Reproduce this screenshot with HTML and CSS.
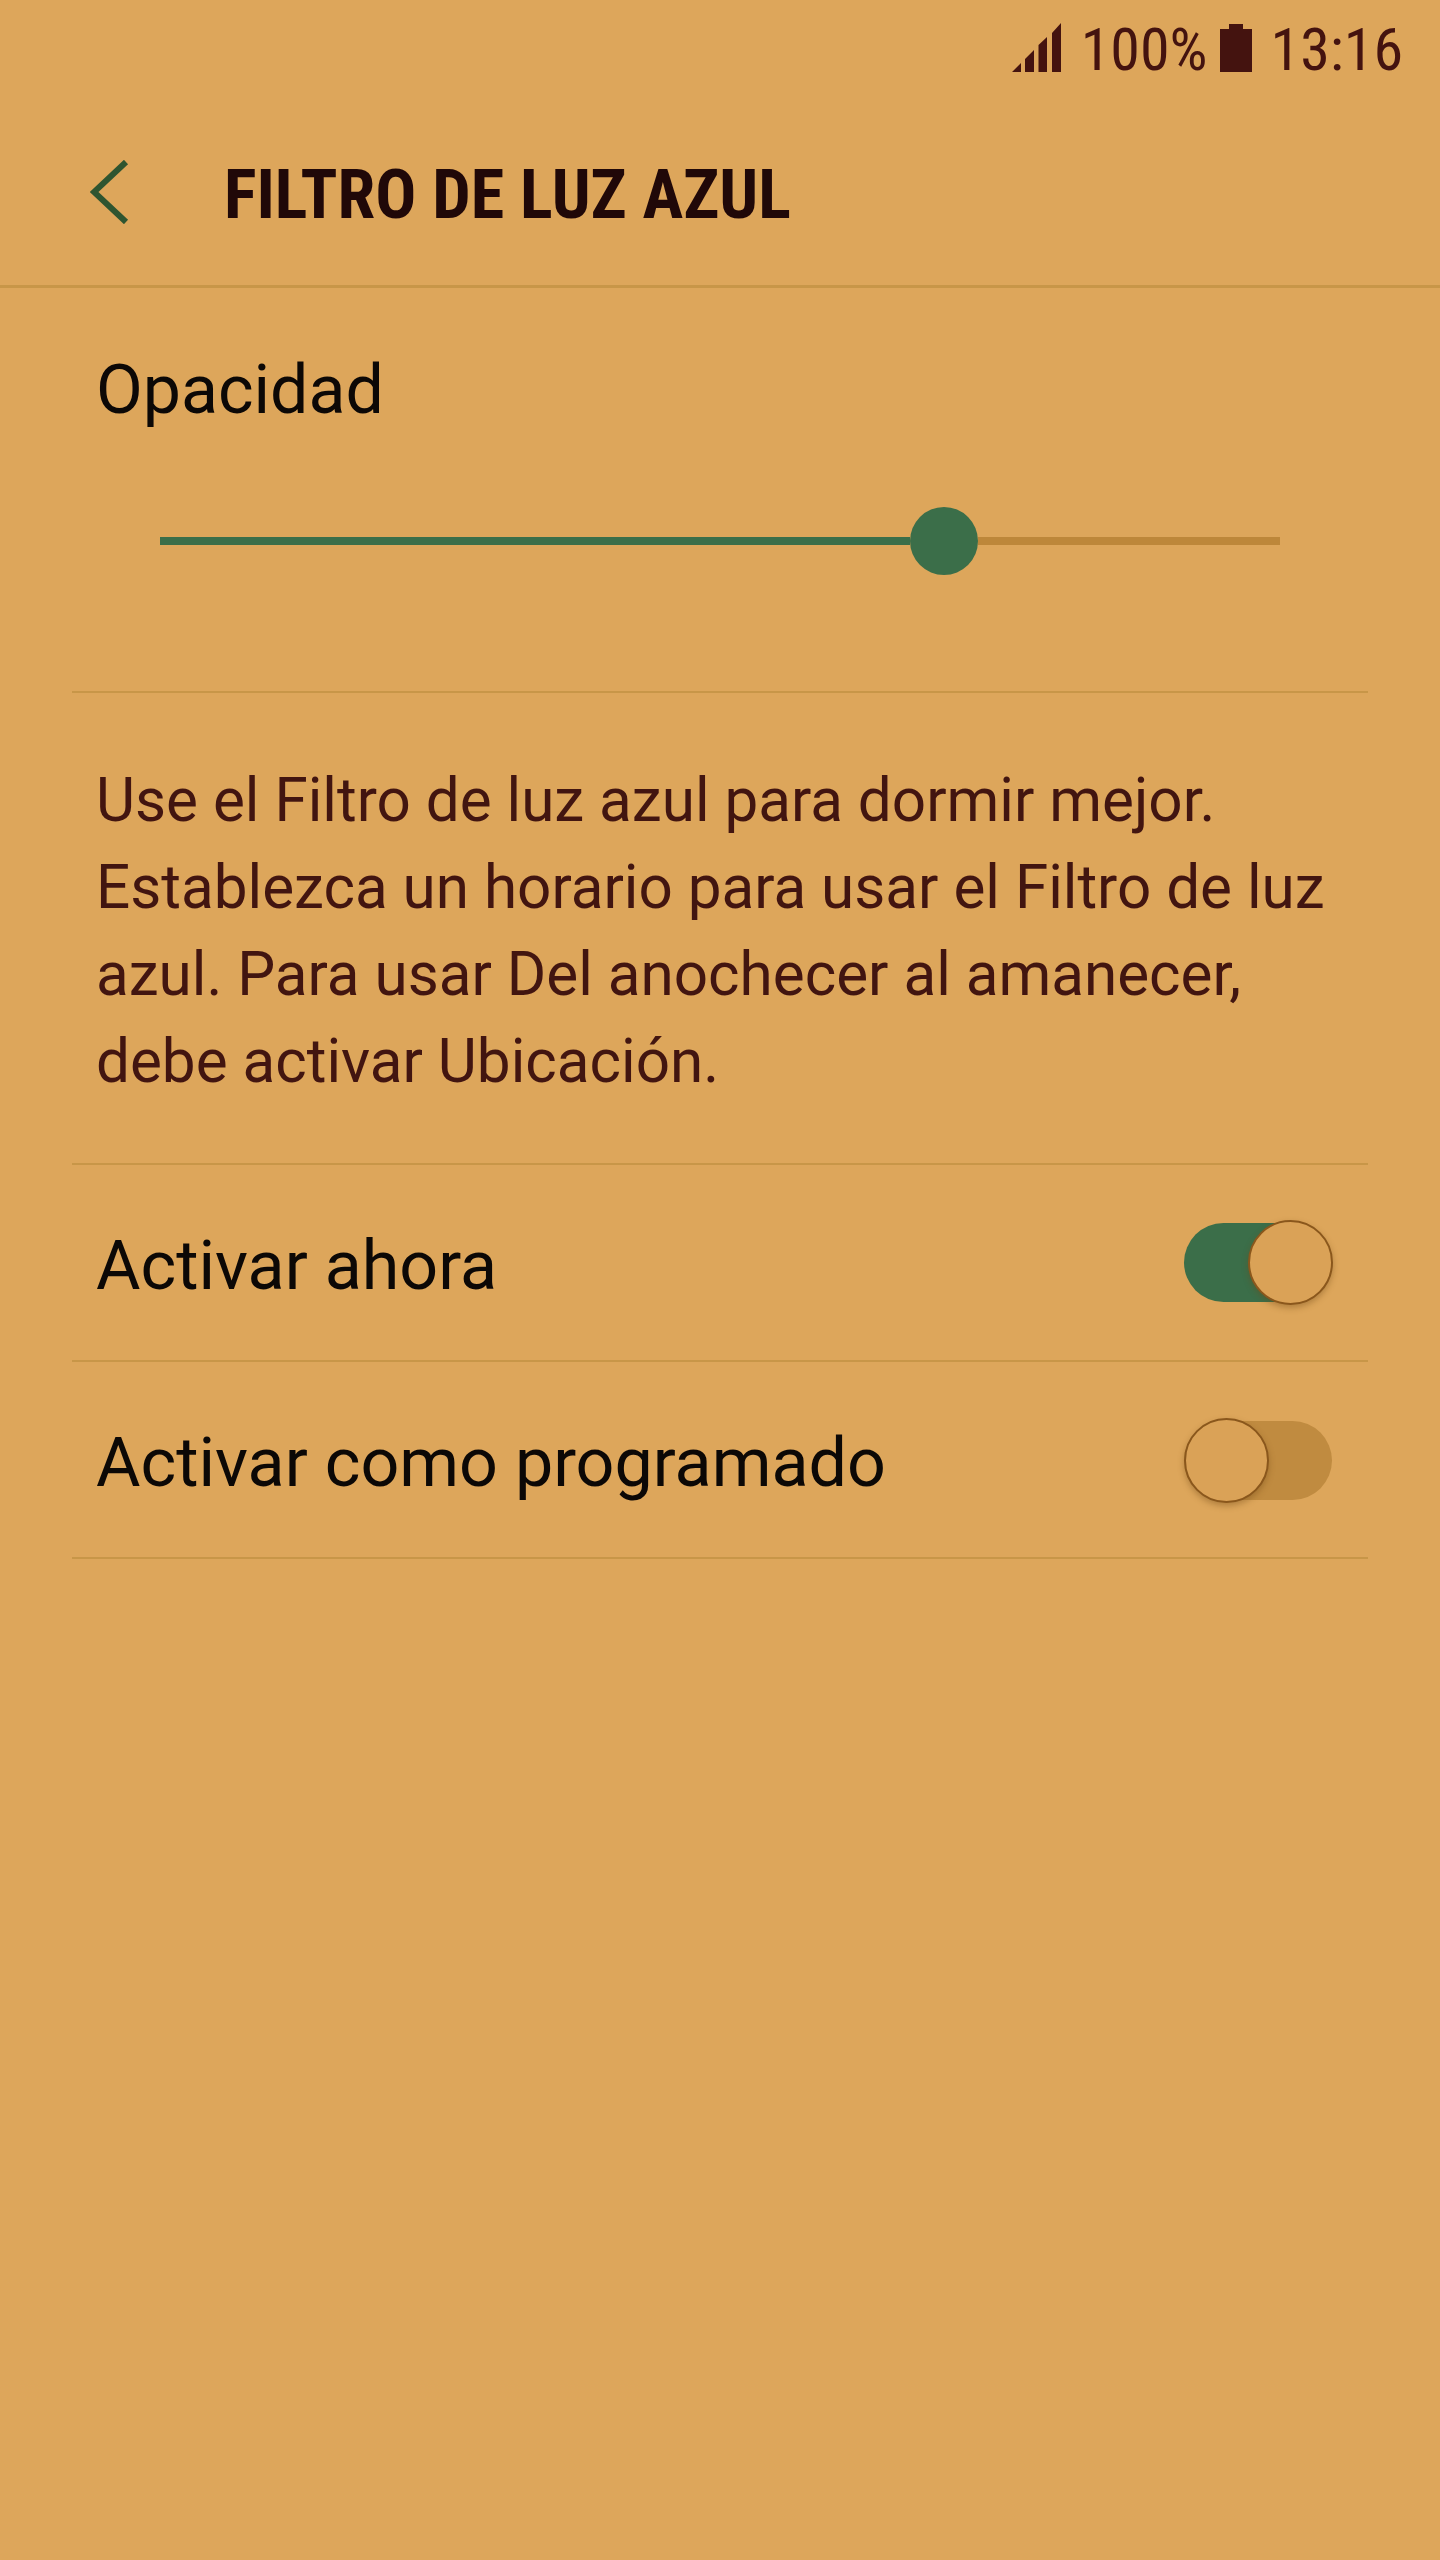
FILE: index.html
```html
<!DOCTYPE html>
<html lang="es">
  <head>
    <meta charset="utf-8">
    <title>Filtro de luz azul</title>
    <link rel="stylesheet" href="styles.css">
  </head>
  <body>
    <div class="screen">
      <div class="status-bar">
        <svg class="signal" width="49" height="49" viewBox="0 0 49 49">
          <path d="M0 49 L9 40 V49 Z M13 49 V36 L22 27 V49 Z M26.5 49 V22 L35 14 V49 Z M40 49 V10 L49 0 V49 Z"/>
        </svg>
        <span class="status-text">100%</span>
        <svg class="battery" width="32" height="48" viewBox="0 0 32 48">
          <path d="M9 0 H23 V5 H32 V48 H0 V5 H9 Z"/>
        </svg>
        <span class="status-text">13:16</span>
      </div>

      <div class="app-bar">
        <svg class="back" width="39" height="64" viewBox="0 0 39 64">
          <path d="M36 2 L4 32 L36 62"/>
        </svg>
        <h1 class="title">FILTRO DE LUZ AZUL</h1>
      </div>

      <div class="content">
        <div class="section opacity">
          <div class="label">Opacidad</div>
          <div class="slider">
            <div class="slider-fill"></div>
            <div class="slider-thumb"></div>
            <div class="slider-rest"></div>
          </div>
        </div>

        <div class="section description">
          Use el Filtro de luz azul para dormir mejor. Establezca un horario para usar el Filtro de luz azul. Para usar Del anochecer al amanecer, debe activar Ubicación.
        </div>

        <div class="section row">
          <div class="row-label">Activar ahora</div>
          <div class="toggle on"><div class="knob"></div></div>
        </div>

        <div class="section row">
          <div class="row-label">Activar como programado</div>
          <div class="toggle"><div class="knob"></div></div>
        </div>
      </div>
    </div>
  </body>
</html>
```

FILE: styles.css
```css
html,
body {
  margin: 0;
  padding: 0;
}

body {
  font-family: Roboto, "Liberation Sans", sans-serif;
  background-color: #dda65b;
}

.screen {
  width: 1440px;
  height: 2560px;
  overflow: hidden;
  background-color: #dda65b;
}

.status-bar {
  height: 96px;
  box-sizing: border-box;
  padding: 23px 37px 0 0;
  display: flex;
  justify-content: flex-end;
  align-items: flex-start;
  color: #44130f;
}

.status-text {
  font-size: 60px;
  line-height: 54px;
  font-stretch: 75%;
}

.signal {
  fill: #44130f;
  margin-right: 20px;
}

.battery {
  fill: #44130f;
  margin: 1px 19px 0 12px;
}

.app-bar {
  height: 192px;
  box-sizing: border-box;
  border-bottom: 3px solid #c89648;
  display: flex;
  align-items: flex-start;
  padding: 64px 0 0 90px;
}

.back {
  fill: none;
  stroke: #2f5530;
  stroke-width: 6;
}

.title {
  margin: 3px 0 0 95px;
  font-size: 68.2px;
  line-height: 64px;
  font-weight: 700;
  font-stretch: 75%;
  color: #200808;
  white-space: nowrap;
}

.content {
  padding: 0 72px;
  width: 1296px;
}

.section {
  box-sizing: border-box;
  border-bottom: 2px solid #c89648;
}

.opacity {
  height: 405px;
  padding: 62px 24px 0;
}

.label {
  font-size: 68px;
  line-height: 80px;
  color: #0c0806;
}

.slider {
  margin: 77px 64px 0 64px;
  height: 68px;
  display: flex;
  align-items: center;
}

.slider-fill {
  width: 750px;
  height: 8px;
  background-color: #3b6e49;
}

.slider-thumb {
  width: 68px;
  height: 68px;
  border-radius: 50%;
  background-color: #3b6e49;
}

.slider-rest {
  flex: 1;
  height: 8px;
  background-color: #bd873a;
}

.description {
  height: 472px;
  padding: 64px 24px 0;
  font-size: 60.2px;
  line-height: 87px;
  color: #421510;
}

.row {
  height: 197px;
  padding: 2px 36px 0 24px;
  display: flex;
  justify-content: space-between;
  align-items: center;
}

.row-label {
  padding-top: 4px;
  font-size: 68.2px;
  color: #0c0806;
}

.toggle {
  position: relative;
  width: 148px;
  height: 79px;
  border-radius: 40px;
  background-color: #c08b40;
}

.toggle.on {
  margin-top: -2px;
  background-color: #3b6e49;
}

.knob {
  position: absolute;
  top: -3px;
  left: 0;
  width: 85px;
  height: 85px;
  box-sizing: border-box;
  border-radius: 50%;
  border: 2px solid #8a571c;
  background-color: #daa257;
  box-shadow: 0 3px 6px rgba(110, 70, 20, 0.4);
}

.toggle.on .knob {
  left: 64px;
}
```
